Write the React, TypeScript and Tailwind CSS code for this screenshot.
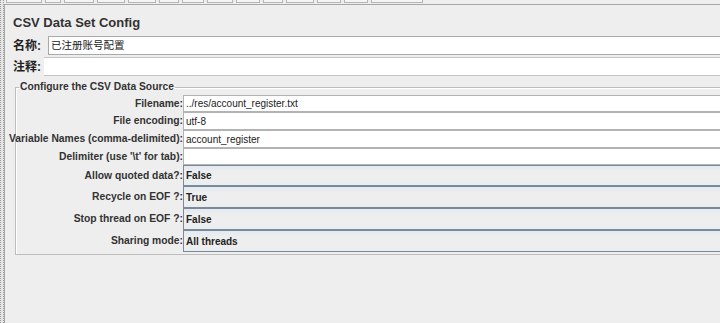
import React from "react";

const textRows = [
  { label: "Filename:", value: "../res/account_register.txt", h: "h-[17px]" },
  { label: "File encoding:", value: "utf-8", h: "h-[18px]" },
  { label: "Variable Names (comma-delimited):", value: "account_register", h: "h-[18px]" },
  { label: "Delimiter (use '\\t' for tab):", value: "", h: "h-[17px]" },
];

const comboRows = [
  { label: "Allow quoted data?:", value: "False", h: "h-[21px]" },
  { label: "Recycle on EOF ?:", value: "True", h: "h-[22px]" },
  { label: "Stop thread on EOF ?:", value: "False", h: "h-[22px]" },
  { label: "Sharing mode:", value: "All threads", h: "h-[22px]" },
];

const toolbarTabs = [36, 16, 30, 28, 28, 20, 22, 26, 24, 20, 28, 24, 24, 52];

export default function App() {
  return (
    <div className="flex h-[323px] w-[720px] overflow-hidden bg-[#eeeeee] font-['Liberation_Sans','Noto_Sans_CJK_SC',sans-serif] text-[#222]">
      {/* splitter */}
      <div className="h-full w-[4px] border-x border-dotted border-[#9c9c9c] bg-[#e6e6e6]" />

      <div className="flex min-w-0 flex-1 flex-col">
        {/* bottom edge of the toolbar above */}
        <div className="flex h-[4px] items-start gap-[3px] pl-[2px]">
          {toolbarTabs.map((w, i) => (
            <div
              key={i}
              className="h-[3px] border-x border-b border-[#b4b4b4] bg-[#f4f4f4]"
              style={{ width: w }}
            />
          ))}
        </div>

        <div className="flex flex-1 flex-col border-t border-l border-[#a6a6a6] pl-[8px]">
          <h1 className="mt-[10px] h-[16px] text-[13px] leading-[16px] font-bold text-[#333]">
            CSV Data Set Config
          </h1>

          {/* name */}
          <div className="mt-[5px] flex h-[19px] items-center">
            <span className="w-[35px] text-[12px] font-bold">名称:</span>
            <div className="flex h-full flex-1 items-center border border-r-0 border-[#a9a9a9] bg-white pl-[2px] text-[10.5px]">
              已注册账号配置
            </div>
          </div>

          {/* comment */}
          <div className="mt-[2px] flex h-[19px] items-center">
            <span className="w-[31px] text-[12px] font-bold">注释:</span>
            <div className="h-full flex-1 border-y border-[#c4c4c4] bg-white" />
          </div>

          <fieldset className="mt-[5px] mr-[-4px] ml-[2px] border border-r-0 border-[#bdbdbd] pb-[2px] shadow-[inset_1px_1px_0_#ffffff]">
            <legend className="ml-[3px] px-[1px] text-[10.3px] leading-[12px] font-bold text-[#333]">
              Configure the CSV Data Source
            </legend>

            <div className="mt-[2px] grid grid-cols-[167px_1fr]">
              {textRows.map((r) => (
                <React.Fragment key={r.label}>
                  <div
                    className={`${r.h} flex items-center justify-end whitespace-nowrap text-[10.3px] font-bold text-[#333]`}
                  >
                    {r.label}
                  </div>
                  <div
                    className={`${r.h} flex items-center border border-r-0 border-[#b3b3b3] bg-white pl-[2px] text-[10px] text-[#222]`}
                  >
                    {r.value}
                  </div>
                </React.Fragment>
              ))}
              {comboRows.map((r) => (
                <React.Fragment key={r.label}>
                  <div
                    className={`${r.h} flex items-center justify-end whitespace-nowrap text-[10.3px] font-bold text-[#333]`}
                  >
                    {r.label}
                  </div>
                  <div
                    className={`${r.h} flex items-center border border-r-0 border-[#7c8a98] bg-[linear-gradient(#e2eaf3,#eeeeee_30%,#eeeeee_75%,#e8edf2)] pl-[2px] text-[10px] font-bold text-[#222]`}
                  >
                    {r.value}
                  </div>
                </React.Fragment>
              ))}
            </div>
          </fieldset>
        </div>
      </div>
    </div>
  );
}
